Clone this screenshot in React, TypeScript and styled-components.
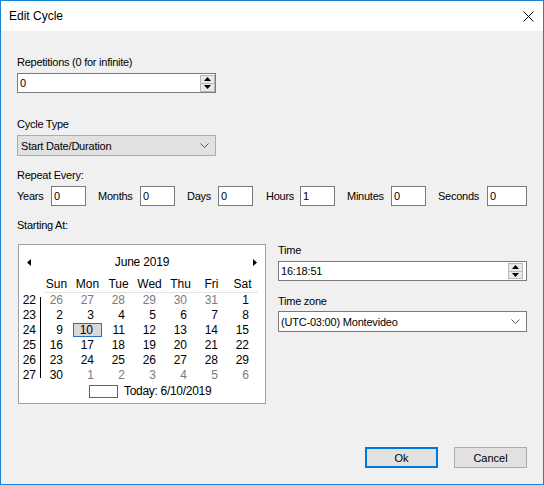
import React from "react";
import styled, { createGlobalStyle } from "styled-components";

const GlobalStyle = createGlobalStyle`
  html, body { margin: 0; padding: 0; background: #ffffff; }
  * { box-sizing: border-box; }
`;

const Window = styled.div`
  width: 544px;
  height: 485px;
  border: 1px solid #1883d7;
  display: flex;
  flex-direction: column;
  font-family: "Liberation Sans", Arial, sans-serif;
  color: #000;
`;

const TitleBar = styled.div`
  height: 30px;
  background: #fff;
  display: flex;
  align-items: center;
  justify-content: space-between;
  padding-left: 8px;
`;

const TitleText = styled.span`
  font-size: 12px;
  line-height: 16px;
`;

const CloseBox = styled.div`
  width: 30px;
  height: 30px;
  display: flex;
  align-items: center;
  justify-content: center;
`;

const Body = styled.div`
  flex: 1;
  background: #f0f0f0;
  padding: 24px 16px 16px 16px;
  display: flex;
  flex-direction: column;
`;

const Label = styled.div<{ $mt?: number; $mb?: number }>`
  font-size: 11px;
  line-height: 14px;
  letter-spacing: -0.25px;
  margin-top: ${(p) => p.$mt ?? 0}px;
  margin-bottom: ${(p) => p.$mb ?? 4}px;
  white-space: nowrap;
`;

const TextBox = styled.div<{ $w?: number; $h?: number; $fill?: boolean; $pr?: number }>`
  ${(p) => (p.$fill ? "align-self: stretch;" : `width: ${p.$w}px;`)}
  height: ${(p) => p.$h ?? 20}px;
  border: 1px solid #7a7a7a;
  background: #fff;
  display: flex;
  align-items: center;
  padding-left: 2px;
  padding-right: ${(p) => p.$pr ?? 0}px;
  font-size: 11px;
  letter-spacing: -0.2px;
  flex-shrink: 0;
`;

const BoxText = styled.span`
  flex: 1;
  white-space: nowrap;
`;

const Spin = styled.div<{ $h: number }>`
  width: 15px;
  height: ${(p) => p.$h}px;
  display: flex;
  flex-direction: column;
  border: 1px solid #b9b9b9;
  background: #e9e9e9;
`;

const SpinBtn = styled.div<{ $top?: boolean }>`
  flex: 1;
  display: flex;
  align-items: center;
  justify-content: center;
  ${(p) => (p.$top ? "border-bottom: 1px solid #b9b9b9;" : "")}
`;

const Combo = styled.div<{ $w?: number; $flat?: boolean }>`
  ${(p) => (p.$w ? `width: ${p.$w}px;` : "align-self: stretch;")}
  height: 21px;
  border: 1px solid ${(p) => (p.$flat ? "#7a7a7a" : "#adadad")};
  background: ${(p) => (p.$flat ? "#fff" : "#e1e1e1")};
  display: flex;
  align-items: center;
  padding-left: ${(p) => (p.$flat ? 2 : 3)}px;
  padding-right: 6px;
  font-size: 11px;
  letter-spacing: -0.2px;
`;

const RepeatRow = styled.div`
  display: flex;
  align-items: center;
`;

const Unit = styled.div<{ $mr: number }>`
  display: flex;
  align-items: center;
  margin-right: ${(p) => p.$mr}px;
`;

const UnitLabel = styled.span<{ $w: number }>`
  width: ${(p) => p.$w}px;
  font-size: 11px;
  letter-spacing: -0.25px;
  white-space: nowrap;
`;

const Lower = styled.div`
  display: flex;
  gap: 12px;
  margin-top: 11px;
`;

const Calendar = styled.div`
  width: 248px;
  height: 160px;
  margin-left: 1px;
  margin-top: 1px;
  border: 1px solid #a0a0a0;
  background: #fff;
  display: flex;
  flex-direction: column;
  font-size: 12px;
  padding-top: 9px;
`;

const NavRow = styled.div`
  height: 16px;
  display: flex;
  align-items: center;
  justify-content: space-between;
  padding: 0 8px 0 8px;
  line-height: 16px;
`;

const MonthTitle = styled.span`
  flex: 1;
  text-align: center;
  letter-spacing: -0.2px;
`;

const HeaderRow = styled.div`
  display: grid;
  grid-template-columns: 22px repeat(7, 31px);
  height: 16px;
  line-height: 16px;
  margin-top: 6px;
`;

const HeadCell = styled.span`
  text-align: center;
`;

const Divider = styled.div`
  margin-left: 26px;
  width: 213px;
  height: 1px;
  background: #e3e3e3;
`;

const Dates = styled.div`
  display: flex;
`;

const WeekCol = styled.div`
  width: 22px;
  position: relative;
  display: flex;
  flex-direction: column;
  &::after {
    content: "";
    position: absolute;
    right: 0;
    top: 4px;
    bottom: 5px;
    width: 1px;
    background: #000;
  }
`;

const WeekNum = styled.span`
  height: 15px;
  line-height: 15px;
  text-align: right;
  padding-right: 5px;
`;

const DayGrid = styled.div`
  display: grid;
  grid-template-columns: repeat(7, 31px);
  grid-auto-rows: 15px;
`;

const Day = styled.span<{ $muted?: boolean; $sel?: boolean }>`
  line-height: ${(p) => (p.$sel ? 13 : 15)}px;
  text-align: right;
  padding-right: ${(p) => (p.$sel ? 8 : 9)}px;
  color: ${(p) => (p.$muted ? "#7a7a7a" : "#000")};
  ${(p) =>
    p.$sel
      ? `background: #d9d9d9; border: 1px solid #1e73c8; margin: 0 1px 1px 1px;`
      : ""}
`;

const TodayRow = styled.div`
  display: flex;
  align-items: center;
  padding-left: 70px;
  margin-top: 2px;
  height: 13px;
  gap: 6px;
`;

const TodayBox = styled.span`
  width: 29px;
  height: 13px;
  border: 1px solid #1e73c8;
`;

const TodayText = styled.span`
  letter-spacing: -0.3px;
  line-height: 13px;
`;

const RightCol = styled.div`
  flex: 1;
  display: flex;
  flex-direction: column;
`;

const Footer = styled.div`
  margin-top: auto;
  display: flex;
  justify-content: flex-end;
  gap: 16px;
`;

const Button = styled.div<{ $primary?: boolean }>`
  width: 73px;
  height: 21px;
  background: #e1e1e1;
  border: ${(p) => (p.$primary ? "2px solid #0078d7" : "1px solid #adadad")};
  display: flex;
  align-items: center;
  justify-content: center;
  font-size: 11px;
`;

const Chevron = () => (
  <svg width="9" height="5" viewBox="0 0 9 5">
    <path d="M0.5 0.5 L4.5 4.5 L8.5 0.5" fill="none" stroke="#555" strokeWidth="1" />
  </svg>
);

const Tri = ({ up }: { up?: boolean }) => (
  <svg width="7" height="4" viewBox="0 0 7 4">
    <path d={up ? "M3.5 0 L7 4 L0 4 Z" : "M0 0 L7 0 L3.5 4 Z"} fill="#000" />
  </svg>
);

const NavArrow = ({ right }: { right?: boolean }) => (
  <svg width="4" height="7" viewBox="0 0 4 7">
    <path d={right ? "M0 0 L4 3.5 L0 7 Z" : "M4 0 L0 3.5 L4 7 Z"} fill="#000" />
  </svg>
);

const Spinner = ({ h }: { h: number }) => (
  <Spin $h={h}>
    <SpinBtn $top>
      <Tri up />
    </SpinBtn>
    <SpinBtn>
      <Tri />
    </SpinBtn>
  </Spin>
);

const weeks: { wk: number; days: { d: number; m?: boolean; s?: boolean }[] }[] = [
  { wk: 22, days: [26, 27, 28, 29, 30, 31].map((d) => ({ d, m: true })).concat([{ d: 1 }]) },
  { wk: 23, days: [2, 3, 4, 5, 6, 7, 8].map((d) => ({ d })) },
  { wk: 24, days: [9, 10, 11, 12, 13, 14, 15].map((d) => ({ d, s: d === 10 })) },
  { wk: 25, days: [16, 17, 18, 19, 20, 21, 22].map((d) => ({ d })) },
  { wk: 26, days: [23, 24, 25, 26, 27, 28, 29].map((d) => ({ d })) },
  { wk: 27, days: [{ d: 30 }].concat([1, 2, 3, 4, 5, 6].map((d) => ({ d, m: true }))) },
];

const units = [
  { label: "Years", lw: 34, value: "0", iw: 35, mr: 12 },
  { label: "Months", lw: 42, value: "0", iw: 35, mr: 12 },
  { label: "Days", lw: 31, value: "0", iw: 35, mr: 13 },
  { label: "Hours", lw: 34, value: "1", iw: 35, mr: 12 },
  { label: "Minutes", lw: 44, value: "0", iw: 35, mr: 12 },
  { label: "Seconds", lw: 49, value: "0", iw: 40, mr: 0 },
];

export default function App() {
  return (
    <>
      <GlobalStyle />
      <Window>
        <TitleBar>
          <TitleText>Edit Cycle</TitleText>
          <CloseBox>
            <svg width="11" height="11" viewBox="0 0 11 11">
              <path d="M0.5 0.5 L10.5 10.5 M10.5 0.5 L0.5 10.5" stroke="#000" strokeWidth="1" />
            </svg>
          </CloseBox>
        </TitleBar>
        <Body>
          <Label>Repetitions (0 for infinite)</Label>
          <TextBox $w={199} $pr={0}>
            <BoxText>0</BoxText>
            <Spinner h={17} />
          </TextBox>

          <Label $mt={24}>Cycle Type</Label>
          <Combo $w={199}>
            <BoxText>Start Date/Duration</BoxText>
            <Chevron />
          </Combo>

          <Label $mt={12}>Repeat Every:</Label>
          <RepeatRow>
            {units.map((u) => (
              <Unit key={u.label} $mr={u.mr}>
                <UnitLabel $w={u.lw}>{u.label}</UnitLabel>
                <TextBox $w={u.iw}>
                  <BoxText>{u.value}</BoxText>
                </TextBox>
              </Unit>
            ))}
          </RepeatRow>

          <Label $mt={12} $mb={0}>Starting At:</Label>
          <Lower>
            <Calendar>
              <NavRow>
                <NavArrow />
                <MonthTitle>June 2019</MonthTitle>
                <NavArrow right />
              </NavRow>
              <HeaderRow>
                <span />
                {["Sun", "Mon", "Tue", "Wed", "Thu", "Fri", "Sat"].map((d) => (
                  <HeadCell key={d}>{d}</HeadCell>
                ))}
              </HeaderRow>
              <Divider />
              <Dates>
                <WeekCol>
                  {weeks.map((w) => (
                    <WeekNum key={w.wk}>{w.wk}</WeekNum>
                  ))}
                </WeekCol>
                <DayGrid>
                  {weeks.flatMap((w) =>
                    w.days.map((d, i) => (
                      <Day key={`${w.wk}-${i}`} $muted={d.m} $sel={d.s}>
                        {d.d}
                      </Day>
                    ))
                  )}
                </DayGrid>
              </Dates>
              <TodayRow>
                <TodayBox />
                <TodayText>Today: 6/10/2019</TodayText>
              </TodayRow>
            </Calendar>
            <RightCol>
              <Label>Time</Label>
              <TextBox $fill $pr={3}>
                <BoxText>16:18:51</BoxText>
                <Spinner h={16} />
              </TextBox>
              <Label $mt={13} $mb={3}>Time zone</Label>
              <Combo $flat>
                <BoxText>(UTC-03:00) Montevideo</BoxText>
                <Chevron />
              </Combo>
            </RightCol>
          </Lower>
          <Footer>
            <Button $primary>Ok</Button>
            <Button>Cancel</Button>
          </Footer>
        </Body>
      </Window>
    </>
  );
}
